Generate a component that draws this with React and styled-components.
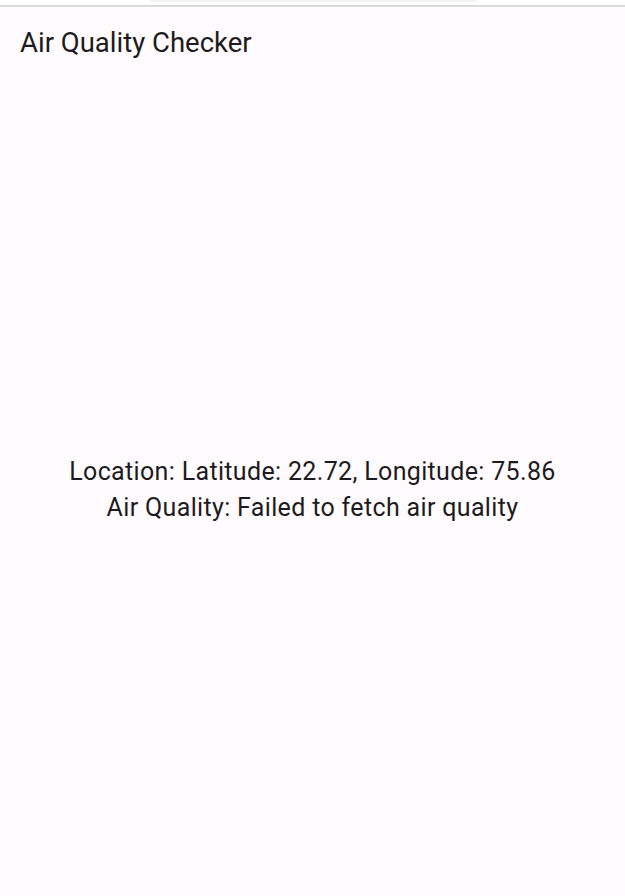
import styled, { createGlobalStyle } from 'styled-components';

const GlobalStyle = createGlobalStyle`
  html, body {
    margin: 0;
    padding: 0;
    background: #ffffff;
  }
  #root {
    min-height: 100vh;
  }
`;

const Page = styled.div`
  display: flex;
  flex-direction: column;
  height: 896px;
  font-family: Roboto, 'Liberation Sans', sans-serif;
  color: #1d1b20;
`;

const TopStrip = styled.div`
  display: flex;
  justify-content: center;
  height: 5px;
  background: #ffffff;
`;

const Handle = styled.div`
  width: 326px;
  height: 2px;
  background: #f2f2f2;
`;

const Divider = styled.div`
  height: 2px;
  background: #dadada;
`;

const Screen = styled.div`
  flex: 1;
  display: flex;
  flex-direction: column;
  background: #fffbfe;
`;

const AppBar = styled.header`
  display: flex;
  align-items: center;
  height: 70px;
  padding: 0 20px;
  box-sizing: border-box;
`;

const Title = styled.h1`
  margin: 0;
  font-size: 27.5px;
  font-weight: 400;
  line-height: 35px;
`;

const Body = styled.main`
  flex: 1;
  display: flex;
  flex-direction: column;
  align-items: center;
  justify-content: center;
  padding-top: 6px;
`;

const Line = styled.p`
  margin: 0;
  font-size: 25px;
  line-height: 36px;
  letter-spacing: 0.34px;
  text-align: center;
`;

const App = () => {
  const latitude = 22.72;
  const longitude = 75.86;
  const airQuality = 'Failed to fetch air quality';

  return (
    <>
      <GlobalStyle />
      <Page>
        <TopStrip>
          <Handle />
        </TopStrip>
        <Divider />
        <Screen>
          <AppBar>
            <Title>Air Quality Checker</Title>
          </AppBar>
          <Body>
            <Line>{`Location: Latitude: ${latitude}, Longitude: ${longitude}`}</Line>
            <Line>{`Air Quality: ${airQuality}`}</Line>
          </Body>
        </Screen>
      </Page>
    </>
  );
};

export default App;
